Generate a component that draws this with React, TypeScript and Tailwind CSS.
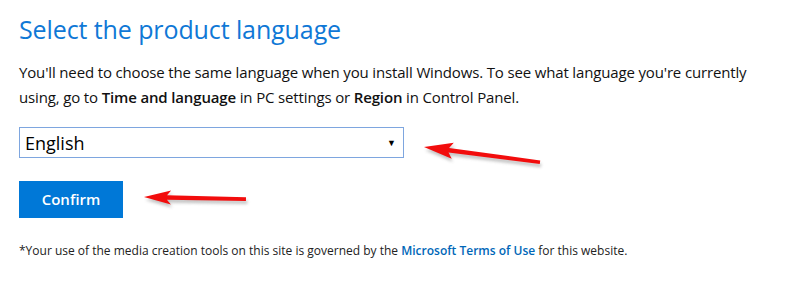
const font = { fontFamily: '"Open Sans", "Noto Sans", Arial, sans-serif' };

function Arrow({ x, y, angle, length, head, spread }: { x: number; y: number; angle: number; length: number; head: number; spread: number }) {
  const pts = [
    [0, 0],
    [head + 3, -spread],
    [head - 1, -2.2],
    [length, -1.6],
    [length, 2],
    [head - 1, 2.2],
    [head + 3, spread],
  ]
    .map((p) => p.join(","))
    .join(" ");
  return (
    <g transform={`translate(${x} ${y}) rotate(${angle})`}>
      <polygon points={pts} fill="#7a7a7a" opacity="0.45" transform="translate(1.5 3)" filter="url(#blur)" />
      <polygon points={pts} fill="#f20d0d" />
    </g>
  );
}

export default function App() {
  return (
    <div className="relative w-[808px] h-[283px] bg-white overflow-hidden" style={font}>
      <div className="pl-[19px] pt-[12px]">
        <h1 className="text-[25px] leading-[34px] text-[#0f78d6] font-normal tracking-[-0.1px]">
          Select the product language
        </h1>
        <p className="mt-[14px] text-[15px] leading-[25px] text-[#111] tracking-[-0.15px]">
          You'll need to choose the same language when you install Windows. To see what language you're currently
          <br />
          using, go to <span className="font-semibold">Time and language</span> in PC settings or{" "}
          <span className="font-semibold">Region</span> in Control Panel.
        </p>
        <div className="mt-[17px] w-[385px] h-[31px] border border-[#7ea6df] flex items-center justify-between pl-[5px] pr-[7px]">
          <span className="text-[18px] leading-none text-black">English</span>
          <span className="text-[9px] leading-none text-black">▼</span>
        </div>
        <button className="mt-[23px] w-[104px] h-[37px] bg-[#0078d7] text-white text-[15px] font-semibold flex items-center justify-center">
          Confirm
        </button>
        <p className="mt-[24px] text-[12px] leading-[18px] text-[#222] tracking-[0px]">
          *Your use of the media creation tools on this site is governed by the{" "}
          <span className="text-[#0067b8] font-semibold">Microsoft Terms of Use</span> for this website.
        </p>
      </div>
      <svg className="absolute left-0 top-0" width="808" height="283">
        <defs>
          <filter id="blur" x="-10%" y="-50%" width="120%" height="200%">
            <feGaussianBlur stdDeviation="1.5" />
          </filter>
        </defs>
        <Arrow x={424} y={147} angle={7.4} length={117} head={26} spread={8} />
        <Arrow x={144} y={197} angle={1.1} length={102} head={24} spread={7} />
      </svg>
    </div>
  );
}
